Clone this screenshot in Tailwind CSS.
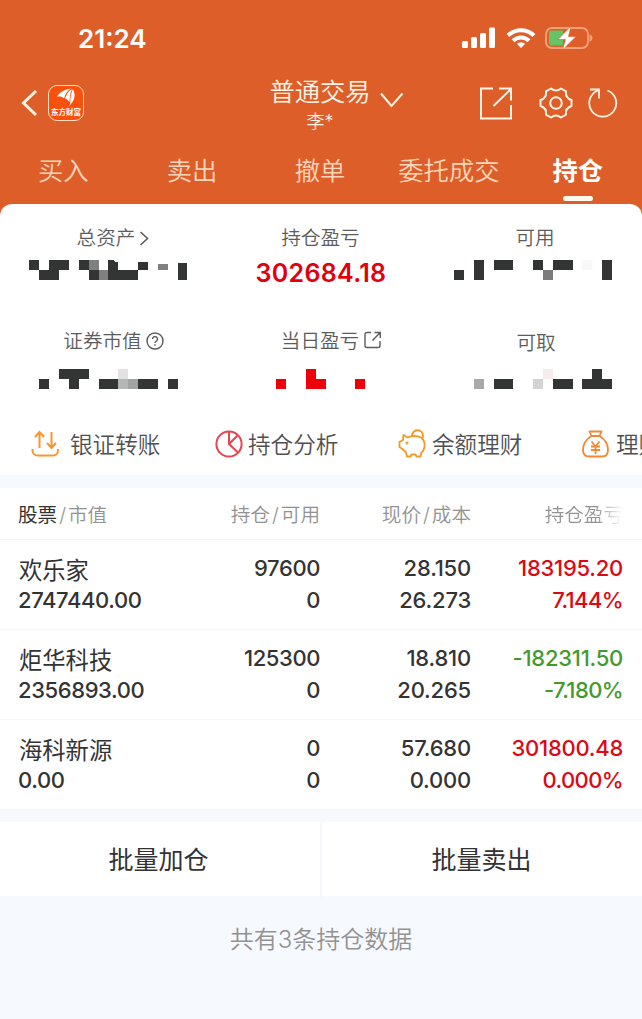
<!DOCTYPE html>
<html lang="zh-CN">
<head>
    <meta charset="UTF-8">
    <meta name="viewport" content="width=device-width, initial-scale=1.0">
    <title>普通交易 - 持仓</title>
    <script src="https://cdn.jsdelivr.net/npm/@tailwindcss/browser@4"></script>
</head>
<body class="w-[642px] h-[1019px] overflow-hidden bg-[#f6f9fe] font-['Inter','Noto_Sans_CJK_SC',sans-serif] text-[#333] leading-none">
    <!-- Header -->
    <header class="bg-[#de5e2a] text-[#fff3e4]">
        <!-- Status bar -->
        <div class="h-[74px] flex items-center justify-between pl-[78px] pr-[50px] pt-[3px] text-white">
            <span class="text-[26px] font-semibold">21:24</span>
            <div class="flex items-center pb-[2px]">
                <svg class="w-[34px] h-[22px] mr-[10px]" viewBox="0 0 34 22" fill="currentColor">
                    <rect x="0" y="14" width="6" height="7" rx="1.5" />
                    <rect x="9" y="10" width="6" height="11" rx="1.5" />
                    <rect x="18" y="6" width="6" height="15" rx="1.5" />
                    <rect x="27" y="0.5" width="6" height="20.5" rx="1.5" />
                </svg>
                <svg class="w-[30px] h-[22px] mr-[9px]" viewBox="0 0 30 22" fill="none" stroke="currentColor" stroke-width="4">
                    <path d="M2 8.500a18.500 18.500 0 0 1 26 0" />
                    <path d="M7 13.800a11.500 11.500 0 0 1 16 0" />
                    <path d="M15 21l-4.200-4.200a6.200 6.200 0 0 1 8.400 0z" fill="currentColor" stroke="none" />
                </svg>
                <svg class="w-[48px] h-[24px] -mr-px" viewBox="0 0 48 24" fill="none">
                    <rect x="1" y="2" width="42" height="20" rx="6" stroke="#f1a27c" stroke-width="1.800" />
                    <path d="M44.500 8.500c4 1 4 6 0 7z" fill="#f1a27c" />
                    <path d="M7 4.500h11v15H7a3 3 0 0 1-3-3v-9a3 3 0 0 1 3-3z" fill="#65c466" />
                    <path d="M26 0L13 13.500h7.500L17.500 24 31 10.500h-7.500z" fill="#fff" stroke="#de5e2a" stroke-width="0.600" />
                </svg>
            </div>
        </div>

        <!-- Title bar -->
        <div class="h-[66px] grid grid-cols-[214px_214px_214px]">
            <div class="flex items-center pl-[20px] pb-[8px]">
                <svg class="w-[20px] h-[28px] mr-[8px]" viewBox="0 0 20 28" fill="none" stroke="currentColor" stroke-width="3">
                    <path d="M16 2L3.500 14 16 26" />
                </svg>
                <div class="w-[36px] h-[36px] rounded-[9px] border border-[#ffe0c0] bg-[#f9510d] flex flex-col items-center pt-[2px] text-white">
                    <svg class="w-[20px] h-[19px]" viewBox="0 0 20 19" fill="currentColor">
                        <path d="M1 9C3 4.500 7 2 15 0.500C11 3 9.500 6 8 10.500C6 8.500 4 8.200 1 9z" />
                        <path d="M9 10.500C10.500 6 12.500 3 16 1C14 5 13.800 9 13.500 14C12.500 12.500 11 11 9 10.500z" />
                        <path d="M14.300 14.500C14.300 9 15 5 17 1C20 7 19 13 12 19C13.500 17.500 14.200 16.500 14.300 14.500z" />
                    </svg>
                    <span class="text-[7.500px] font-bold mt-[2px] whitespace-nowrap">东方财富</span>
                </div>
            </div>
            <div class="relative flex flex-col items-center pt-[5px] pr-[2px]">
                <span class="text-[25.300px] leading-[26px] whitespace-nowrap font-[350]">普通交易</span>
                <span class="text-[18px] leading-[20px] mt-[7px] font-[350]">李*</span>
                <svg class="absolute left-[165px] top-[17px] w-[26px] h-[18px]" viewBox="0 0 26 18" fill="none" stroke="currentColor" stroke-width="2">
                    <path d="M2 2.500l10.500 12.500L23.500 2.500" />
                </svg>
            </div>
            <div class="flex items-center pl-[51px] pb-[8px]">
                <svg class="w-[34px] h-[34px] mr-[25px]" viewBox="0 0 34 34" fill="none" stroke="currentColor" stroke-width="2">
                    <path d="M14 2.500H2v30h30V19M14.500 20L32 3M20 2.500h12v12" />
                </svg>
                <svg class="w-[36px] h-[34px] mr-[13px]" viewBox="0 0 36 34" fill="none" stroke="currentColor" stroke-width="2" stroke-linejoin="round">
                    <path d="M13 2.500Q18 6.500 23 2.500L28 5.300Q27 12 33.500 14V20Q27 22 28 28.700L23 31.500Q18 27.500 13 31.500L8 28.700Q9 22 2.500 20V14Q9 12 8 5.300z" />
                    <circle cx="18" cy="17" r="5.800" />
                </svg>
                <svg class="w-[32px] h-[32px]" viewBox="0 0 32 32" fill="none" stroke="currentColor" stroke-width="1.800">
                    <path d="M20.500 3.500A13.500 13.500 0 1 1 11 3.500M3 2.500h9v9" />
                </svg>
            </div>
        </div>

        <!-- Tabs -->
        <nav class="h-[64px] grid grid-cols-5 text-[25.300px] text-[#fcd6bb] font-[350] whitespace-nowrap text-center">
            <span class="leading-[62px] pr-[2px]">买入</span>
            <span class="leading-[62px] pr-px">卖出</span>
            <span class="leading-[62px] pr-[2px]">撤单</span>
            <span class="leading-[62px] pr-px">委托成交</span>
            <span class="flex flex-col items-center leading-[58px] pt-[2px] text-white font-bold">持仓
                <i class="block w-[30px] h-[5px] mt-[-4px] rounded-full bg-[#fffaf0]"></i>
            </span>
        </nav>
    </header>

    <!-- Asset summary -->
    <section class="bg-[#de5e2a]">
        <div class="h-[271px] bg-white rounded-t-[12px] overflow-hidden">
            <div class="h-[103px] grid grid-cols-3 pt-[25px] text-[19.600px] text-[#5c5c5c] font-[350]">
                <div>
                    <div class="h-[20px] flex items-center justify-center pl-[12px]">总资产
                        <svg class="w-[10px] h-[16px] ml-[4px]" viewBox="0 0 10 16" fill="none" stroke="currentColor" stroke-width="1.600"><path d="M1.500 1L8.500 7.500l-7 6.500" /></svg>
                    </div>
                    <svg class="w-[214px] h-[20px] mt-[11px]" viewBox="0 0 214 20" fill="#333535" shape-rendering="crispEdges">
                        <path d="M29 0h10v10H29zM49 0h20v10H49zM79 0h10v10H79zM108 0h5l2 2h3v8h-10zM138 2h10v8h-10zM178 3h9v17h-9zM39 10h20v10H39zM89 10h10v10H89zM108 10h30v10h-30z" />
                        <path d="M89 0h10v10H89zM99 10h9v10h-9zM158 4h10v6h-10z" fill="#808080" />
                    </svg>
                </div>
                <div class="text-center">
                    <div class="h-[20px] leading-[19px] pr-px">持仓盈亏</div>
                    <div class="mt-[11px] text-[25px] leading-[26px] font-semibold text-[#e2000f] tracking-[0.3px]">302684.18</div>
                </div>
                <div>
                    <div class="h-[20px] leading-[19px] text-center">可用</div>
                    <svg class="w-[214px] h-[20px] mt-[11px]" viewBox="428 0 214 20" fill="#333535" shape-rendering="crispEdges">
                        <path d="M454 10h10v10h-10zM474 0h10v20h-10zM494 0h19v10h-19zM533 0h10v10h-10zM553 0h20v10h-20zM602 0h10v20h-10z" />
                        <path d="M543 10h10v10h-10z" fill="#7c7c7c" />
                        <path d="M582 0h10v10h-10z" fill="#f8f8f8" />
                    </svg>
                </div>
            </div>
            <div class="h-[103px] grid grid-cols-3 pt-[23px] text-[19.600px] text-[#5c5c5c] font-[350]">
                <div>
                    <div class="h-[22px] flex items-center justify-center pl-[13px] pt-px">证券市值
                        <svg class="w-[18px] h-[18px] ml-[4px] -mt-[2px]" viewBox="0 0 18 18" fill="none" stroke="currentColor" stroke-width="1.400">
                            <circle cx="9" cy="9" r="8" />
                            <path d="M6.500 7a2.500 2.500 0 1 1 3.800 2.100Q9 9.900 9 11M9 12.300v1.500" />
                        </svg>
                    </div>
                    <svg class="w-[214px] h-[20px] mt-[17px]" viewBox="0 0 214 20" fill="#333535" shape-rendering="crispEdges">
                        <path d="M59 0h30v10H79v10H69V10H59zM39 10h10v10H39zM99 10h19v10H99zM138 10h20v10h-20zM168 10h10v10h-10z" />
                        <path d="M118 0h10v10h-10z" fill="#e2e2e2" />
                        <path d="M118 10h10v10h-10z" fill="#b4b6b6" />
                        <path d="M128 10h10v10h-10z" fill="#9fa3a3" />
                    </svg>
                </div>
                <div>
                    <div class="h-[22px] flex items-center justify-center pl-[21px] pt-px">当日盈亏
                        <svg class="w-[18px] h-[18px] ml-[5px] -mt-[3px]" viewBox="0 0 18 18" fill="none" stroke="currentColor" stroke-width="1.400">
                            <path d="M7 1.500H3A2 2 0 0 0 1 3.500v11a2 2 0 0 0 2 2h11a2 2 0 0 0 2-2V10M8.500 9.500L16 1.800M10.500 1.500H16.300V7" />
                        </svg>
                    </div>
                    <svg class="w-[214px] h-[20px] mt-[17px]" viewBox="214 0 214 20" fill="#ee000b" shape-rendering="crispEdges">
                        <path d="M306 0h10v10h10v10h-20zM276 10h10v10h-10zM355 10h10v10h-10z" />
                    </svg>
                </div>
                <div>
                    <div class="h-[22px] leading-[27px] text-center pl-[2px]">可取</div>
                    <svg class="w-[214px] h-[20px] mt-[17px]" viewBox="428 0 214 20" fill="#333535" shape-rendering="crispEdges">
                        <path d="M592 0h10v10h10v10h-30V10h10zM494 10h19v10h-19zM553 10h20v10h-20z" />
                        <path d="M543 0h10v10h-10z" fill="#f6ebed" />
                        <path d="M474 10h10v10h-10z" fill="#a9a9a9" />
                        <path d="M533 10h10v10h-10z" fill="#d3d3d3" />
                    </svg>
                </div>
            </div>

            <!-- Shortcuts -->
            <div class="h-[65px] pl-[30px] pt-[5px] flex text-[22.600px] text-[#505050] font-[350] whitespace-nowrap">
                <div class="w-[184px] shrink-0 flex h-[60px] items-center">
                    <svg class="w-[30px] h-[30px] mr-[10px] -mt-[2px]" viewBox="0 0 30 30" fill="none" stroke="#f7952f" stroke-width="2">
                        <path d="M9.500 19V3.500M5 8l4.500-5L14 8M21.500 3v15.500M17 14l4.500 5 4.500-5M2.500 20v1.500a5 5 0 0 0 5 5H23a5 5 0 0 0 5-5V20" />
                    </svg>银证转账
                </div>
                <div class="w-[184px] shrink-0 flex h-[60px] items-center">
                    <svg class="w-[30px] h-[30px] mr-[4px] -mt-[2px]" viewBox="0 0 30 30" fill="none" stroke="#e8434f" stroke-width="2">
                        <circle cx="15" cy="15" r="12.600" />
                        <path d="M15 2.500V15l9 8.500M15 15l8.500-8.500" />
                    </svg>持仓分析
                </div>
                <div class="w-[183px] shrink-0 flex h-[60px] items-center">
                    <svg class="w-[30px] h-[30px] mr-[4px] -mt-[2px]" viewBox="0 0 30 30" fill="none" stroke="#ee9b27" stroke-width="1.800" stroke-linejoin="round">
                        <path d="M5.500 6L9.500 8.500Q17 5.500 23 8.500Q27.500 12 26.500 18Q26 21.500 23.500 23.500L22.500 27.500H18.500L17.500 25.500H13.500L12.500 27.500H9L8 23.500L5 20.500L1.500 18V13L5 11z" />
                        <path d="M14 7A5.500 5.500 0 0 1 25 6.500Q25 8.500 24 10" />
                        <circle cx="9" cy="14" r="0.600" />
                    </svg>余额理财
                </div>
                <div class="shrink-0 flex h-[60px] items-center">
                    <svg class="w-[30px] h-[30px] mr-[5px] -mt-[2px]" viewBox="0 0 30 30" fill="none" stroke="#f08a35" stroke-width="1.800" stroke-linejoin="round">
                        <path d="M8.500 2.500H20.500L18.500 7H10.500zM10.500 7C5 10.500 2 16 2 21Q2 27.500 8 27.500H21Q27 27.500 27 21C27 16 24 10.500 18.500 7" />
                        <path d="M10.500 12.500l4 5 4-5M14.500 17.500V25M10 17.500h9M10 21h9" />
                    </svg>理财
                </div>
            </div>
        </div>
    </section>

    <!-- Holdings table -->
    <section class="mt-[13px] bg-white">
        <div class="h-[52px] pl-[18px] pr-[19px] pt-[4px] grid grid-cols-[152px_150px_151px_152px] items-center text-right text-[19.600px] text-[#929292] font-[350] border-b border-[#f2f3f5] whitespace-nowrap">
            <span class="text-left"><b class="font-normal text-[#333]">股票</b><i class="not-italic mx-[2px]">/</i>市值</span>
            <span>持仓<i class="not-italic mx-[2px]">/</i>可用</span>
            <span>现价<i class="not-italic mx-[2px]">/</i>成本</span>
            <span class="flex justify-end bg-linear-to-r from-[#929292] from-82% to-white bg-clip-text text-transparent">持仓盈亏</span>
        </div>
        <div id="holdings"></div>
    </section>

    <!-- Batch actions -->
    <div class="mt-[12px] h-[74px] grid grid-cols-[322px_320px] bg-white text-[25px] text-[#333] text-center leading-[77px]">
        <button class="border-r-2 border-[#f6f7fa] pr-[3px]">批量加仓</button>
        <button class="pr-px">批量卖出</button>
    </div>
    <p class="mt-[31px] text-center text-[24px] leading-[26px] text-[#929292] font-[350]">共有3条持仓数据</p>

    <script>
        const holdings = [
            { name: '欢乐家', value: '2747440.00', amount: '97600', usable: '0', price: '28.150', cost: '26.273', profit: '183195.20', rate: '7.144%' },
            { name: '炬华科技', value: '2356893.00', amount: '125300', usable: '0', price: '18.810', cost: '20.265', profit: '-182311.50', rate: '-7.180%' },
            { name: '海科新源', value: '0.00', amount: '0', usable: '0', price: '57.680', cost: '0.000', profit: '301800.48', rate: '0.000%' }
        ];

        document.getElementById('holdings').innerHTML = holdings.map(item => `
            <div class="h-[90px] pl-[18px] pr-[19px] pt-[13px] grid grid-cols-[152px_150px_151px_152px] text-right text-[22px] leading-[31.500px] tracking-[-0.4px] font-medium border-b border-[#f5f6f8]">
                <div class="text-left"><p class="text-[23.300px] tracking-normal font-normal pl-px pt-[2px] -mb-[2px]">${item.name}</p><p>${item.value}</p></div>
                <div><p>${item.amount}</p><p>${item.usable}</p></div>
                <div class="tracking-[-0.2px]"><p>${item.price}</p><p>${item.cost}</p></div>
                <div class="${item.profit.startsWith('-') ? 'text-[#45992c]' : 'text-[#dc0814]'}"><p class="tracking-[-0.25px]">${item.profit}</p><p class="tracking-[-0.6px]">${item.rate}</p></div>
            </div>
        `).join('');
    </script>
</body>
</html>
